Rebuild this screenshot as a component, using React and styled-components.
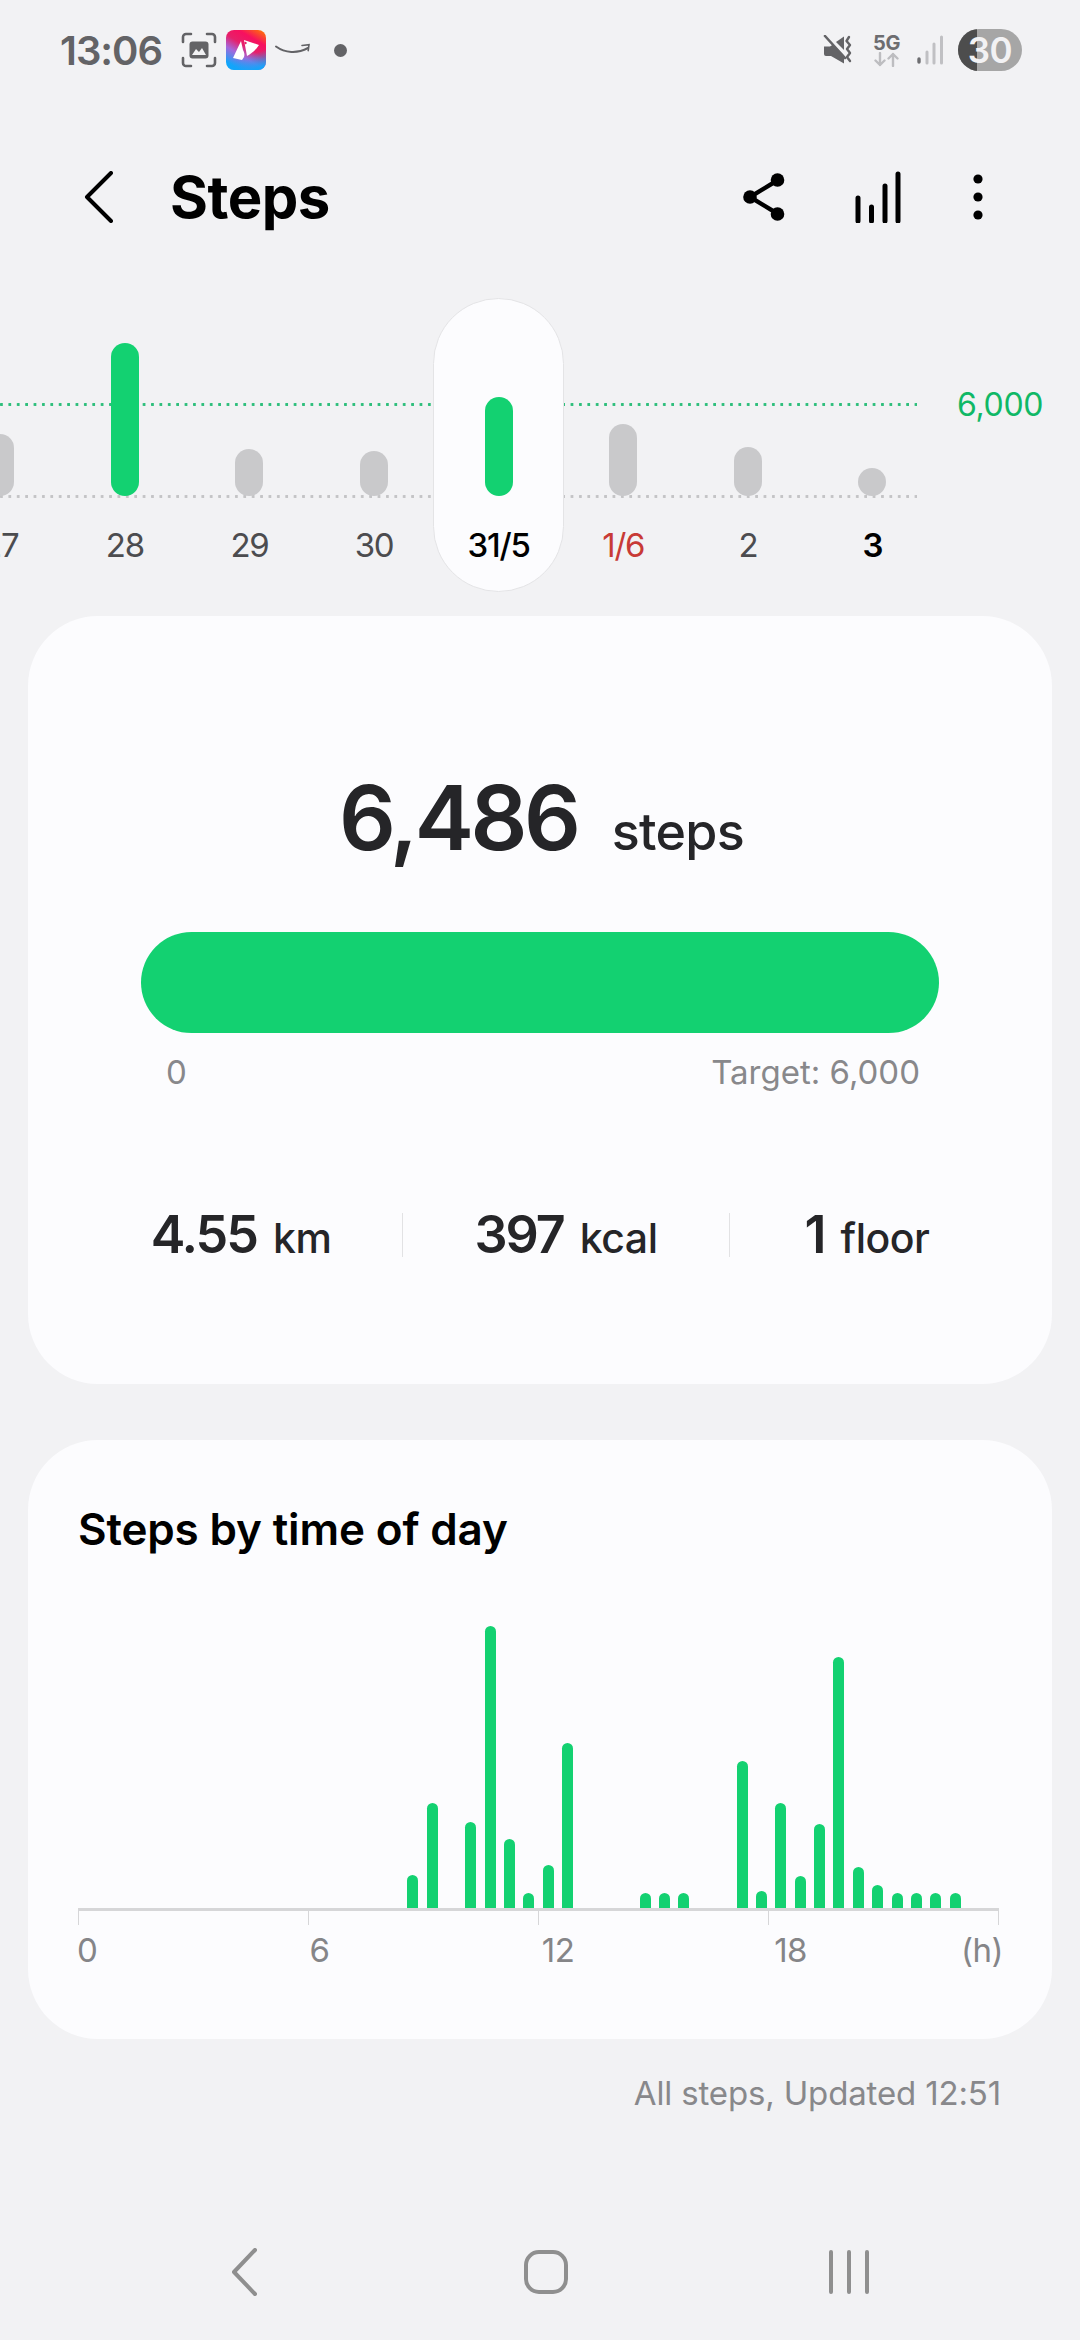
import React from "react";
import styled, { createGlobalStyle } from "styled-components";

const GREEN = "#13d171";

const GlobalStyle = createGlobalStyle`
  html, body {
    margin: 0;
    padding: 0;
    background: #f2f2f4;
    font-family: Inter, "Noto Sans", sans-serif;
  }
  * { box-sizing: border-box; }
`;

const Page = styled.div`
  width: 1080px;
  height: 2340px;
  overflow: hidden;
  background: #f2f2f4;
  display: flex;
  flex-direction: column;
`;

const Icon = styled.svg`
  flex: none;
  margin-left: ${(p) => p.$ml || 0}px;
  margin-right: ${(p) => p.$mr || 0}px;
`;

/* status bar */
const StatusBar = styled.div`
  height: 100px;
  padding: 0 58px 0 60px;
  display: flex;
  align-items: center;
  justify-content: space-between;
`;
const StatusGroup = styled.div`
  display: flex;
  align-items: center;
`;
const Clock = styled.span`
  font-size: 40px;
  font-weight: 600;
  letter-spacing: -1px;
  color: #636366;
  margin-right: 19px;
`;
const NoticeDot = styled.i`
  width: 13px;
  height: 13px;
  margin-left: 23px;
  border-radius: 50%;
  background: #636366;
`;
const FiveG = styled.div`
  width: 27px;
  margin: 0 16px 0 20px;
  display: flex;
  flex-direction: column;
  align-items: center;
`;
const FiveGText = styled.span`
  font-size: 20px;
  line-height: 18px;
  font-weight: 700;
  letter-spacing: -0.5px;
  color: #6d6d70;
`;
const Battery = styled.div`
  position: relative;
  width: 64px;
  height: 42px;
  margin-left: 14px;
  border-radius: 21px;
  overflow: hidden;
  background: #a6a6a6;
  display: flex;
  align-items: center;
  justify-content: center;
  &::before {
    content: "";
    position: absolute;
    left: 0;
    top: 0;
    bottom: 0;
    width: 19px;
    background: #4d4d4d;
  }
`;
const BatteryText = styled.span`
  position: relative;
  font-size: 35px;
  font-weight: 600;
  color: #f2f2f4;
  letter-spacing: -0.5px;
`;

/* title bar */
const TitleBar = styled.div`
  height: 194px;
  padding: 0 0 0 84px;
  display: flex;
  align-items: center;
`;
const Title = styled.h1`
  margin: 0 0 0 56px;
  font-size: 58px;
  font-weight: 650;
  letter-spacing: -0.5px;
  color: #000;
  flex: 1;
`;
const TitleActions = styled.div`
  display: flex;
  align-items: center;
  padding-right: 97px;
`;

/* days strip */
const Strip = styled.div`
  position: relative;
  height: 322px;
  padding-top: 4px;
`;
const DotLine = styled.div`
  position: absolute;
  left: 0;
  width: 917px;
  top: ${(p) => p.$top}px;
  height: 3px;
  background-image: radial-gradient(circle at 1.5px 1.5px, ${(p) => p.$color} 1.4px, transparent 1.7px);
  background-size: 8.4px 3px;
  background-repeat: repeat-x;
`;
const GoalLabel = styled.span`
  position: absolute;
  left: 957px;
  top: 91px;
  font-size: 32px;
  line-height: 40px;
  letter-spacing: -0.3px;
  color: #10b866;
`;
const Days = styled.div`
  position: relative;
  height: 294px;
  margin-left: -62px;
  display: flex;
`;
const Day = styled.div`
  position: relative;
  width: 124.6px;
  flex: none;
  display: flex;
  flex-direction: column;
  align-items: center;
  ${(p) =>
    p.$selected &&
    `&::before {
      content: "";
      position: absolute;
      left: -3px;
      right: -3px;
      top: 0;
      bottom: 0;
      border-radius: 66px;
      background: #fcfcfe;
      border: 1.5px solid #e4e4e6;
    }`}
`;
const BarSlot = styled.div`
  position: relative;
  height: 198px;
  display: flex;
  align-items: flex-end;
`;
const DayBar = styled.div`
  width: 28px;
  border-radius: 14px;
  background: ${(p) => (p.$green ? GREEN : "#c9c9cb")};
`;
const DayLabel = styled.span`
  position: relative;
  margin-top: 29px;
  font-size: 33px;
  line-height: 40px;
  letter-spacing: -1.2px;
  color: ${(p) => p.$color};
  font-weight: ${(p) => p.$weight};
`;

/* cards */
const Card = styled.section`
  margin: 0 28px;
  background: #fcfcfe;
  border-radius: 70px;
`;
const SummaryCard = styled(Card)`
  height: 768px;
  padding: 160px 113px 0;
`;
const Total = styled.div`
  display: flex;
  justify-content: center;
  align-items: baseline;
  height: 84px;
  color: #252528;
  margin-left: 3px;
`;
const TotalValue = styled.span`
  font-size: 89px;
  line-height: 84px;
  font-weight: 600;
  letter-spacing: -3.4px;
`;
const TotalUnit = styled.span`
  margin-left: 34px;
  font-size: 52px;
  font-weight: 550;
  letter-spacing: -0.7px;
`;
const Progress = styled.div`
  margin-top: 72px;
  height: 101px;
  border-radius: 51px;
  background: ${GREEN};
`;
const ProgressLabels = styled.div`
  margin-top: 19px;
  padding: 0 19px 0 25px;
  display: flex;
  justify-content: space-between;
  font-size: 33px;
  line-height: 40px;
  color: #88888b;
`;
const Stats = styled.div`
  margin: 121px -29px 0 -29px;
  display: flex;
  align-items: center;
  color: #252528;
`;
const Stat = styled.div`
  flex: ${(p) => p.$flex};
  padding: 0 ${(p) => p.$pr || 0}px 0 ${(p) => p.$pl || 0}px;
  display: flex;
  align-items: baseline;
  justify-content: center;
  height: 44px;
  & + & {
    border-left: 1.5px solid #e2e2e4;
  }
`;
const StatValue = styled.span`
  font-size: 52px;
  line-height: 44px;
  font-weight: 600;
  letter-spacing: -2px;
`;
const StatUnit = styled.span`
  margin-left: 16px;
  font-size: 41px;
  line-height: 44px;
  font-weight: 550;
  letter-spacing: -0.5px;
`;

const TimeCard = styled(Card)`
  height: 599px;
  margin-top: 56px;
  padding: 62px 50px 0;
`;
const CardTitle = styled.h2`
  margin: 0;
  height: 54px;
  font-size: 44px;
  line-height: 54px;
  font-weight: 600;
  letter-spacing: -0.15px;
  color: #000;
`;
const Bars = styled.div`
  margin-top: 102px;
  height: 250px;
  padding-left: 325px;
  display: flex;
  align-items: flex-end;
`;
const BarCell = styled.div`
  width: 19.39px;
  flex: none;
  display: flex;
  justify-content: center;
`;
const HourBar = styled.div`
  width: 11px;
  border-radius: 5.5px 5.5px 0 0;
  background: ${GREEN};
`;
const Axis = styled.div`
  width: 921px;
  height: 17px;
  border-top: 3px solid #d6d6d8;
  display: flex;
  gap: 229.4px;
`;
const Tick = styled.i`
  width: 3.5px;
  height: 14px;
  background: #d6d6d8;
  &:last-child {
    margin-left: auto;
  }
`;
const AxisLabels = styled.div`
  margin: 5px 0 0 -1px;
  width: 926px;
  display: flex;
  font-size: 33px;
  line-height: 40px;
  letter-spacing: -0.5px;
  color: #858588;
`;
const AxisLabel = styled.span`
  flex: none;
  width: 232.4px;
  &:nth-child(4) {
    width: auto;
  }
`;
const AxisUnit = styled.span`
  margin-left: auto;
`;

const Updated = styled.div`
  margin: 34px 79px 0 0;
  text-align: right;
  font-size: 33px;
  line-height: 40px;
  letter-spacing: -0.15px;
  color: #88888b;
`;

/* navigation */
const NavBar = styled.nav`
  margin-top: 135px;
  padding: 0 211px 0 230px;
  display: flex;
  align-items: center;
  justify-content: space-between;
`;

const days = [
  { label: "27", h: 62, color: "#4c4c4f", weight: 400 },
  { label: "28", h: 153, green: true, color: "#4c4c4f", weight: 400 },
  { label: "29", h: 47, color: "#4c4c4f", weight: 400 },
  { label: "30", h: 45, color: "#4c4c4f", weight: 400 },
  { label: "31/5", h: 99, green: true, color: "#000", weight: 500, selected: true },
  { label: "1/6", h: 72, color: "#c83a36", weight: 400 },
  { label: "2", h: 49, color: "#4c4c4f", weight: 400 },
  { label: "3", h: 28, color: "#000", weight: 600 },
];

const hourBars = [33, 105, 0, 86, 282, 69, 15, 43, 165, 0, 0, 0, 15, 15, 15, 0, 0, 147, 17, 105, 32, 84, 251, 41, 23, 15, 15, 15, 15];

const ScreenshotIcon = () => (
  <Icon width="36" height="36" viewBox="0 0 36 36" fill="none">
    <path d="M2 10V5a3 3 0 0 1 3-3h5M26 2h5a3 3 0 0 1 3 3v5M34 26v5a3 3 0 0 1-3 3h-5M10 34H5a3 3 0 0 1-3-3v-5" stroke="#636366" strokeWidth="2.6" strokeLinecap="round" />
    <rect x="8.5" y="9.5" width="19" height="17" rx="3" fill="#636366" />
    <path d="M11 23l4-6 3 3 3-4 4 7z" fill="#f2f2f4" />
  </Icon>
);

const AppIcon = () => (
  <Icon $ml={9} width="40" height="40" viewBox="0 0 40 40">
    <defs>
      <linearGradient id="appGrad" x1="0.95" y1="0" x2="0.35" y2="1">
        <stop offset="0" stopColor="#ff7a00" />
        <stop offset="0.28" stopColor="#f7105f" />
        <stop offset="0.5" stopColor="#e6206a" />
        <stop offset="0.72" stopColor="#a468dc" />
        <stop offset="1" stopColor="#12a5fa" />
      </linearGradient>
      <linearGradient id="appBlue" x1="0.5" y1="0.3" x2="0.75" y2="1">
        <stop offset="0.45" stopColor="#12a5fa" stopOpacity="0" />
        <stop offset="1" stopColor="#12a5fa" />
      </linearGradient>
    </defs>
    <rect width="40" height="40" rx="8" fill="url(#appGrad)" />
    <rect width="40" height="40" rx="8" fill="url(#appBlue)" />
    <path d="M15 11L7 28l9 2 2-3c1-3 0-5-1-7z" fill="#fff" />
    <path d="M18 10l15 5c-3 5-8 9-12 11-1-5-2-11-3-16z" fill="#fff" />
    <circle cx="19.5" cy="13" r="1.2" fill="#e6206a" />
  </Icon>
);

const SmileIcon = () => (
  <Icon $ml={9} width="36" height="14" viewBox="0 0 36 14" fill="none">
    <path d="M1 3.5c9 6.5 21 7.5 32 1.5" stroke="#636366" strokeWidth="2" strokeLinecap="round" />
    <path d="M27 2.5l7-.8-.8 6" stroke="#636366" strokeWidth="1.6" strokeLinecap="round" fill="none" />
  </Icon>
);

const MuteIcon = () => (
  <Icon width="30" height="30" viewBox="0 0 30 30" fill="none">
    <path d="M1 11.5h6l3-2 11 11v8L8 21H3a2 2 0 0 1-2-2z" fill="#636366" />
    <path d="M13 7l8-5.5V15z" fill="#636366" />
    <path d="M2 1l20 22" stroke="#636366" strokeWidth="2.6" strokeLinecap="round" />
    <path d="M26 2l-2.5 4 3.5 4-3 4 3 4-3 4 3 4" stroke="#636366" strokeWidth="2.4" strokeLinecap="round" strokeLinejoin="round" />
  </Icon>
);

const ArrowsIcon = () => (
  <Icon width="26" height="15" viewBox="0 0 26 15" fill="none" stroke="#bdbdc0" strokeWidth="2.4" strokeLinecap="round" strokeLinejoin="round">
    <path d="M6 1v12M1.5 8.5L6 13l4.5-4.5M19 14V2M14.5 6.5L19 2l4.5 4.5" />
  </Icon>
);

const SignalIcon = () => (
  <Icon width="28" height="30" viewBox="0 0 28 30" strokeLinecap="round">
    <path d="M3 24v3" stroke="#6d6d70" strokeWidth="3.4" />
    <path d="M11 17v11M18 9v19M25.5 2v26" stroke="#c0c0c3" strokeWidth="3" />
  </Icon>
);

const BackIcon = () => (
  <Icon width="30" height="52" viewBox="0 0 30 52" fill="none">
    <path d="M27 2L3 26l24 24" stroke="#000" strokeWidth="4" strokeLinecap="round" strokeLinejoin="round" />
  </Icon>
);

const ShareIcon = () => (
  <Icon $mr={70} width="42" height="48" viewBox="0 0 42 48">
    <path d="M35 7L7 24l28 17" fill="none" stroke="#000" strokeWidth="4.4" />
    <circle cx="7" cy="24" r="6.8" />
    <circle cx="34.5" cy="7" r="6.8" />
    <circle cx="34.5" cy="41" r="6.8" />
  </Icon>
);

const StatsIcon = () => (
  <Icon $mr={72} width="46" height="52" viewBox="0 0 46 52" stroke="#000" strokeWidth="5" strokeLinecap="round">
    <path d="M3 27v23M16.5 36v14M30 15v35M43 3v47" />
  </Icon>
);

const MoreIcon = () => (
  <Icon width="10" height="46" viewBox="0 0 10 46">
    <circle cx="5" cy="5" r="4.6" />
    <circle cx="5" cy="23" r="4.6" />
    <circle cx="5" cy="41" r="4.6" />
  </Icon>
);

const NavBackIcon = () => (
  <Icon width="28" height="48" viewBox="0 0 28 48" fill="none">
    <path d="M25 2L4 24l21 22" stroke="#8f8f8f" strokeWidth="4" strokeLinecap="round" strokeLinejoin="round" />
  </Icon>
);

const NavHomeIcon = () => (
  <Icon $ml={5} width="44" height="44" viewBox="0 0 44 44" fill="none">
    <rect x="2" y="2" width="40" height="40" rx="13" stroke="#8f8f8f" strokeWidth="4" />
  </Icon>
);

const NavRecentIcon = () => (
  <Icon width="40" height="44" viewBox="0 0 40 44" fill="none" stroke="#8f8f8f" strokeWidth="4" strokeLinecap="round">
    <path d="M2 2v40M20 2v40M38 2v40" />
  </Icon>
);

export default function App() {
  return (
    <>
      <GlobalStyle />
      <Page>
        <StatusBar>
          <StatusGroup>
            <Clock>13:06</Clock>
            <ScreenshotIcon />
            <AppIcon />
            <SmileIcon />
            <NoticeDot />
          </StatusGroup>
          <StatusGroup>
            <MuteIcon />
            <FiveG>
              <FiveGText>5G</FiveGText>
              <ArrowsIcon />
            </FiveG>
            <SignalIcon />
            <Battery>
              <BatteryText>30</BatteryText>
            </Battery>
          </StatusGroup>
        </StatusBar>

        <TitleBar>
          <BackIcon />
          <Title>Steps</Title>
          <TitleActions>
            <ShareIcon />
            <StatsIcon />
            <MoreIcon />
          </TitleActions>
        </TitleBar>

        <Strip>
          <DotLine $top={109} $color="#2fbf7c" />
          <DotLine $top={201} $color="#c4c4c6" />
          <GoalLabel>6,000</GoalLabel>
          <Days>
            {days.map((d) => (
              <Day key={d.label} $selected={d.selected}>
                <BarSlot>
                  <DayBar $green={d.green} style={{ height: d.h }} />
                </BarSlot>
                <DayLabel $color={d.color} $weight={d.weight}>
                  {d.label}
                </DayLabel>
              </Day>
            ))}
          </Days>
        </Strip>

        <SummaryCard>
          <Total>
            <TotalValue>6,486</TotalValue>
            <TotalUnit>steps</TotalUnit>
          </Total>
          <Progress />
          <ProgressLabels>
            <span>0</span>
            <span>Target: 6,000</span>
          </ProgressLabels>
          <Stats>
            <Stat $flex="0 0 290px" $pr={32}>
              <StatValue>4.55</StatValue>
              <StatUnit>km</StatUnit>
            </Stat>
            <Stat $flex="0 0 327px">
              <StatValue>397</StatValue>
              <StatUnit>kcal</StatUnit>
            </Stat>
            <Stat $flex="1" $pl={36}>
              <StatValue>1</StatValue>
              <StatUnit>floor</StatUnit>
            </Stat>
          </Stats>
        </SummaryCard>

        <TimeCard>
          <CardTitle>Steps by time of day</CardTitle>
          <Bars>
            {hourBars.map((h, i) => (
              <BarCell key={i}>
                <HourBar style={{ height: h }} />
              </BarCell>
            ))}
          </Bars>
          <Axis>
            {[0, 6, 12, 18, 24].map((t) => (
              <Tick key={t} />
            ))}
          </Axis>
          <AxisLabels>
            <AxisLabel>0</AxisLabel>
            <AxisLabel>6</AxisLabel>
            <AxisLabel>12</AxisLabel>
            <AxisLabel>18</AxisLabel>
            <AxisUnit>(h)</AxisUnit>
          </AxisLabels>
        </TimeCard>

        <Updated>All steps, Updated 12:51</Updated>

        <NavBar>
          <NavBackIcon />
          <NavHomeIcon />
          <NavRecentIcon />
        </NavBar>
      </Page>
    </>
  );
}
